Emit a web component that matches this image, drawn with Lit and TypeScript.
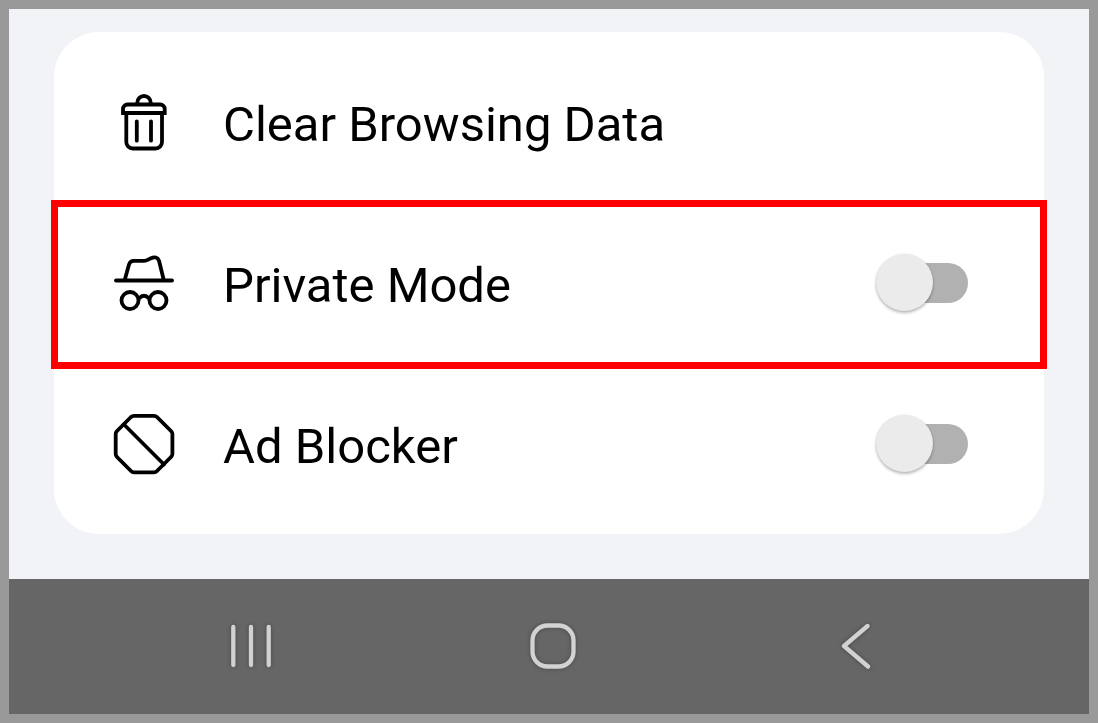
import { LitElement, html, css, svg } from "lit";
import { customElement, state } from "lit/decorators.js";

const trashIcon = svg`
  <path d="M24.300 13v-1.300a6.700 6.700 0 0 1 13.400 0V13" />
  <path d="M10 22v-4a4.500 4.500 0 0 1 4.500-4.500h32.700a4.500 4.500 0 0 1 4.500 4.500v4z" stroke-linejoin="miter" />
  <path d="M13.300 22v29a6.500 6.500 0 0 0 6.500 6.500h22.700a6.500 6.500 0 0 0 6.500-6.500V22" />
  <path d="M23.800 30.300v19.400M38 30.300v19.400" />`;

const incognitoIcon = svg`
  <path d="M3 28.500h56" />
  <path d="M12 27l4-14.500q1.200-3.700 4.700-3.700h10.500q1.800 0 3.500-.9l2.800-1.500q6.500-3 8.600 2.600L50.500 27" />
  <circle cx="17" cy="48.500" r="8.500" />
  <circle cx="45" cy="48.500" r="8.500" />
  <path d="M26 46.500q5-5.500 10 0" />`;

const blockIcon = svg`
  <path d="M21 2.800h20q1.800 0 3 1.200L58 18q1.400 1.400 1.400 3v20q0 1.700-1.400 3L44 58q-1.300 1.300-3 1.300H21q-1.700 0-3-1.300L4 44q-1.300-1.300-1.300-3V21q0-1.600 1.300-3L18 4q1.300-1.200 3-1.200z" />
  <path d="M11 11.500l40 40" />`;

@customElement("app-root")
export class AppRoot extends LitElement {
  static styles = css`
    :host {
      display: block;
      font-family: Roboto, "Liberation Sans", sans-serif;
      color: #000;
    }
    .screen {
      box-sizing: border-box;
      min-height: 100vh;
      display: flex;
      flex-direction: column;
      border: 9px solid #999;
      background: #f1f3f7;
    }
    .content {
      flex: 1;
      padding: 23px 45px 45px;
    }
    .card {
      padding: 9px 0 10px;
      border-radius: 45px;
      background: #fff;
    }
    .row {
      box-sizing: border-box;
      position: relative;
      width: 100%;
      min-height: 161px;
      padding: 0 76px 0 59px;
      border: 0;
      background: none;
      display: flex;
      align-items: center;
      gap: 48px;
      font: inherit;
      color: inherit;
      text-align: left;
      cursor: pointer;
    }
    .highlighted::after {
      content: "";
      position: absolute;
      inset: -2px -3px -6px;
      border: 7px solid #f00;
      pointer-events: none;
    }
    .icon {
      flex: none;
      width: 62px;
      height: 62px;
      fill: none;
      stroke: #000;
      stroke-width: 3.8;
      stroke-linecap: round;
      stroke-linejoin: round;
    }
    .label {
      flex: 1;
      padding-top: 6px;
      font-size: 49px;
      line-height: 60px;
    }
    .switch {
      appearance: none;
      flex: none;
      position: relative;
      display: flex;
      align-items: center;
      width: 92px;
      height: 58px;
      margin: 0;
      border-radius: 29px;
      cursor: pointer;
    }
    .switch::before {
      content: "";
      position: absolute;
      inset: 9px 0 9px 4px;
      border-radius: 20px;
      background: #b1b1b1;
    }
    .switch::after {
      content: "";
      position: relative;
      width: 57px;
      height: 57px;
      border-radius: 50%;
      background: #ebebeb;
      box-shadow: 0 2px 3px rgba(0, 0, 0, 0.26), 0 0 2px rgba(0, 0, 0, 0.1);
    }
    .switch:checked {
      justify-content: flex-end;
    }
    .nav {
      box-sizing: border-box;
      display: grid;
      grid-template-columns: repeat(3, 1fr);
      min-height: 135px;
      padding: 0 82px 2px 91px;
      background: #666;
    }
    .nav-button {
      display: flex;
      align-items: center;
      justify-content: center;
      padding: 0;
      border: 0;
      background: none;
      cursor: pointer;
    }
    .nav-icon {
      width: 60px;
      height: 60px;
      fill: none;
      stroke: #d2d2d2;
      stroke-width: 4.3;
      stroke-linecap: round;
      stroke-linejoin: round;
      filter: drop-shadow(0 0 2px rgba(0, 0, 0, 0.3));
    }
  `;

  @state() private privateMode = false;
  @state() private adBlocker = false;

  render() {
    return html`
      <div class="screen">
        <main class="content">
          <div class="card">
            <button class="row" type="button">
              <svg class="icon" viewBox="0 0 62 62" aria-hidden="true">${trashIcon}</svg>
              <span class="label">Clear Browsing Data</span>
            </button>
            <label class="row highlighted">
              <svg class="icon" viewBox="0 0 62 62" aria-hidden="true">${incognitoIcon}</svg>
              <span class="label">Private Mode</span>
              <input
                class="switch"
                type="checkbox"
                role="switch"
                .checked=${this.privateMode}
                @change=${() => (this.privateMode = !this.privateMode)}
              />
            </label>
            <label class="row">
              <svg class="icon" viewBox="0 0 62 62" aria-hidden="true">${blockIcon}</svg>
              <span class="label">Ad Blocker</span>
              <input
                class="switch"
                type="checkbox"
                role="switch"
                .checked=${this.adBlocker}
                @change=${() => (this.adBlocker = !this.adBlocker)}
              />
            </label>
          </div>
        </main>
        <nav class="nav">
          <button class="nav-button" type="button" aria-label="Recent apps">
            <svg class="nav-icon" viewBox="0 0 60 60" aria-hidden="true">
              <path d="M12.300 11v38M30 11v38M47.700 11v38" />
            </svg>
          </button>
          <button class="nav-button" type="button" aria-label="Home">
            <svg class="nav-icon" viewBox="0 0 60 60" aria-hidden="true">
              <rect x="9.500" y="9.500" width="41" height="41" rx="15" />
            </svg>
          </button>
          <button class="nav-button" type="button" aria-label="Back">
            <svg class="nav-icon" viewBox="0 0 60 60" aria-hidden="true">
              <path d="M41.500 10L18 30l24 20.500" />
            </svg>
          </button>
        </nav>
      </div>
    `;
  }
}
